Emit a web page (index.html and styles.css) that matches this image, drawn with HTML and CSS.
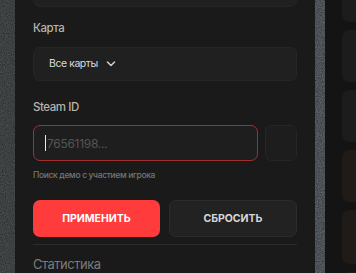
FILE: index.html
```html
<!DOCTYPE html>
<html lang="ru">
<head>
<meta charset="utf-8">
<link rel="stylesheet" href="styles.css">
</head>
<body>
<div class="page">
  <div class="strip strip-left">
    <svg class="noise" width="15" height="273"><filter id="n1"><feTurbulence type="fractalNoise" baseFrequency="0.9" numOctaves="2" seed="3"/><feColorMatrix type="matrix" values="0 0 0 0 0.07  0 0 0 0 0.075  0 0 0 0 0.075  0 0 0 1.6 -0.2"/></filter><rect width="15" height="273" fill="#2a2d2d"/><rect width="15" height="273" filter="url(#n1)"/></svg>
  </div>
  <div class="panel">
    <div class="box cut"></div>
    <div class="label label-map">Карта</div>
    <div class="box select">
      <span>Все карты</span>
      <svg class="chev" width="10" height="6" viewBox="0 0 10 6"><path d="M1.5 1 L5 4.5 L8.5 1" fill="none" stroke="#d0d0d0" stroke-width="1.5" stroke-linecap="round" stroke-linejoin="round"/></svg>
    </div>
    <div class="label label-steam">Steam ID</div>
    <div class="input-row">
      <div class="input"><span class="caret"></span><span class="ph">76561198...</span></div>
      <div class="box square"></div>
    </div>
    <div class="hint">Поиск демо с участием игрока</div>
    <div class="buttons">
      <div class="btn apply">ПРИМЕНИТЬ</div>
      <div class="btn reset">СБРОСИТЬ</div>
    </div>
    <div class="divider"></div>
    <div class="section">Статистика</div>
  </div>
  <div class="strip strip-mid">
    <svg class="noise" width="10" height="273"><filter id="n2"><feTurbulence type="fractalNoise" baseFrequency="0.8" numOctaves="2" seed="7"/><feColorMatrix type="matrix" values="0 0 0 0 0.14  0 0 0 0 0.16  0 0 0 0 0.18  0 0 0 1.2 -0.1"/></filter><rect width="10" height="273" fill="#2e3336"/><rect width="10" height="273" filter="url(#n2)"/></svg>
  </div>
  <div class="side">
    <div class="card c1"></div>
    <div class="card c2"></div>
    <div class="card c3"></div>
    <div class="card brown c4"></div>
    <div class="card brown c5"></div>
    <div class="card brown c6"></div>
  </div>
</div>
</body>
</html>
```

FILE: styles.css
```css
html, body {
  margin: 0;
  padding: 0;
  background: #141414;
  overflow: hidden;
}
.page {
  display: flex;
  width: 356px;
  height: 273px;
  overflow: hidden;
  font-family: Inter, "Noto Sans", sans-serif;
}
.strip {
  flex: none;
  height: 273px;
}
.strip-left { width: 15px; }
.strip-mid { width: 10px; }
.noise { display: block; }
.panel {
  flex: none;
  width: 264px;
  padding: 0 18px;
  background: #1a1a1a;
  display: flex;
  flex-direction: column;
}
.box {
  background: #202020;
  border: 1px solid #262626;
  border-radius: 7px;
  box-sizing: border-box;
}
.cut {
  height: 35px;
  margin-top: -28px;
}
.label {
  font-size: 11.5px;
  line-height: 16px;
  color: #b8b4ae;
  font-weight: 500;
  letter-spacing: -0.45px;
}
.label-map { margin-top: 13px; }
.select {
  margin-top: 11px;
  height: 35px;
  display: flex;
  align-items: center;
  padding-left: 15px;
  gap: 8px;
  font-size: 10.5px;
  letter-spacing: -0.45px;
  color: #dcdcdc;
}
.chev { margin-top: 1px; }
.label-steam { margin-top: 18px; }
.input-row {
  margin-top: 10px;
  display: flex;
  gap: 7px;
  height: 36px;
}
.input {
  flex: 1;
  border: 1px solid #a3302f;
  border-radius: 7px;
  background: #1e1e1e;
  box-sizing: border-box;
  display: flex;
  align-items: center;
  padding-left: 11px;
  font-size: 12px;
  letter-spacing: -0.3px;
  color: #555555;
}
.caret {
  width: 1px;
  height: 16px;
  background: #e8e8e8;
  margin-right: 1px;
}
.square {
  width: 32px;
  height: 36px;
  flex: none;
  background: #1d1d1d;
}
.hint {
  margin-top: 8px;
  font-size: 8.5px;
  line-height: 12px;
  letter-spacing: -0.35px;
  font-weight: 500;
  color: #767676;
}
.buttons {
  margin-top: 19px;
  display: flex;
  gap: 9px;
}
.btn {
  height: 37px;
  border-radius: 7px;
  display: flex;
  align-items: center;
  justify-content: center;
  font-size: 10.5px;
  font-weight: 700;
  box-sizing: border-box;
}
.apply {
  width: 127px;
  background: #ff3b3b;
  color: #fff;
}
.reset {
  flex: 1;
  background: #222222;
  border: 1px solid #2c2c2c;
  color: #d6d6d6;
}
.divider {
  margin-top: 7px;
  height: 1px;
  background: #2a2a2a;
}
.section {
  margin-top: 10px;
  font-size: 13px;
  line-height: 18px;
  letter-spacing: -0.5px;
  color: #7b7b7b;
}
.side {
  flex: 1;
  padding-left: 17px;
  background: #141414;
  display: flex;
  flex-direction: column;
  gap: 8px;
}
.card {
  flex: none;
  width: 40px;
  background: #1c1c1c;
  border-radius: 7px 0 0 7px;
}
.c1 { height: 40px; margin-top: -18px; }
.c2 { height: 52px; }
.c3 { height: 52px; }
.c4 { height: 52px; }
.c5 { height: 54px; }
.c6 { height: 40px; }
.brown { background: #201b16; }
```
